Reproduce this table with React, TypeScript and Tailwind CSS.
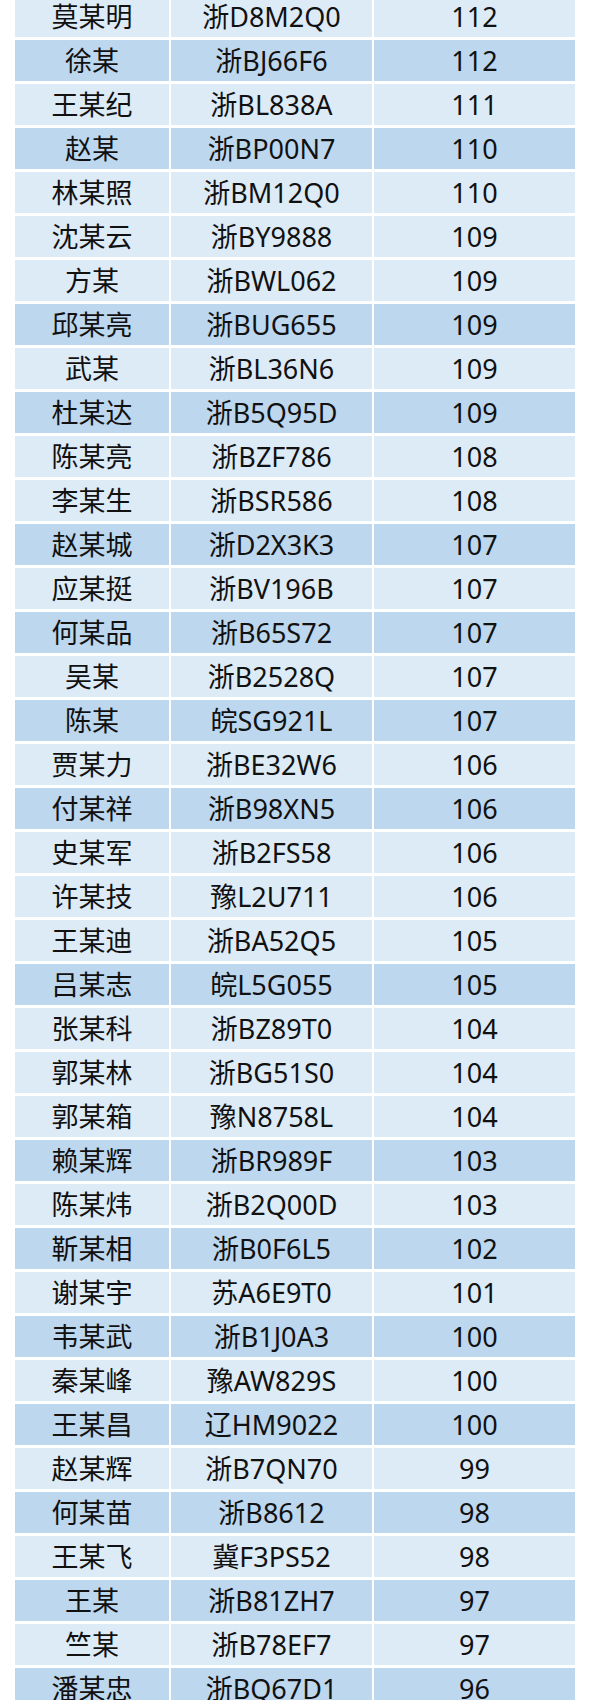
import React from "react";

type Row = [string, string, string, boolean];

const rows: Row[] = [
  ["莫某明", "浙D8M2Q0", "112", false],
  ["徐某", "浙BJ66F6", "112", true],
  ["王某纪", "浙BL838A", "111", false],
  ["赵某", "浙BP00N7", "110", true],
  ["林某照", "浙BM12Q0", "110", false],
  ["沈某云", "浙BY9888", "109", false],
  ["方某", "浙BWL062", "109", false],
  ["邱某亮", "浙BUG655", "109", true],
  ["武某", "浙BL36N6", "109", false],
  ["杜某达", "浙B5Q95D", "109", true],
  ["陈某亮", "浙BZF786", "108", false],
  ["李某生", "浙BSR586", "108", false],
  ["赵某城", "浙D2X3K3", "107", true],
  ["应某挺", "浙BV196B", "107", false],
  ["何某品", "浙B65S72", "107", true],
  ["吴某", "浙B2528Q", "107", false],
  ["陈某", "皖SG921L", "107", true],
  ["贾某力", "浙BE32W6", "106", false],
  ["付某祥", "浙B98XN5", "106", true],
  ["史某军", "浙B2FS58", "106", false],
  ["许某技", "豫L2U711", "106", false],
  ["王某迪", "浙BA52Q5", "105", false],
  ["吕某志", "皖L5G055", "105", true],
  ["张某科", "浙BZ89T0", "104", false],
  ["郭某林", "浙BG51S0", "104", false],
  ["郭某箱", "豫N8758L", "104", false],
  ["赖某辉", "浙BR989F", "103", true],
  ["陈某炜", "浙B2Q00D", "103", false],
  ["靳某相", "浙B0F6L5", "102", true],
  ["谢某宇", "苏A6E9T0", "101", false],
  ["韦某武", "浙B1J0A3", "100", true],
  ["秦某峰", "豫AW829S", "100", false],
  ["王某昌", "辽HM9022", "100", true],
  ["赵某辉", "浙B7QN70", "99", false],
  ["何某苗", "浙B8612", "98", true],
  ["王某飞", "冀F3PS52", "98", false],
  ["王某", "浙B81ZH7", "97", true],
  ["竺某", "浙B78EF7", "97", false],
  ["潘某忠", "浙BQ67D1", "96", true],
];

export default function App() {
  return (
    <div
      className="w-[590px] h-[1700px] overflow-hidden bg-white text-[#111111]"
      style={{ fontFamily: '"Noto Sans", "Noto Sans CJK SC", sans-serif' }}
    >
      <div className="-mt-[4px] ml-[15px] grid grid-cols-[154px_201px_201px] gap-x-[2px] gap-y-[3px] w-[560px]">
        {rows.map(([name, plate, score, dark], i) => {
          const bg = dark ? "bg-[#bdd7ee]" : "bg-[#ddebf7]";
          return (
            <React.Fragment key={i}>
              <div className={`${bg} h-[41px] flex items-center justify-center text-[27px] leading-none`}>
                {name}
              </div>
              <div className={`${bg} h-[41px] flex items-center justify-center text-[27px] leading-none`}>
                {plate}
              </div>
              <div className={`${bg} h-[41px] flex items-center justify-center text-[27px] leading-none`}>
                {score}
              </div>
            </React.Fragment>
          );
        })}
      </div>
    </div>
  );
}
